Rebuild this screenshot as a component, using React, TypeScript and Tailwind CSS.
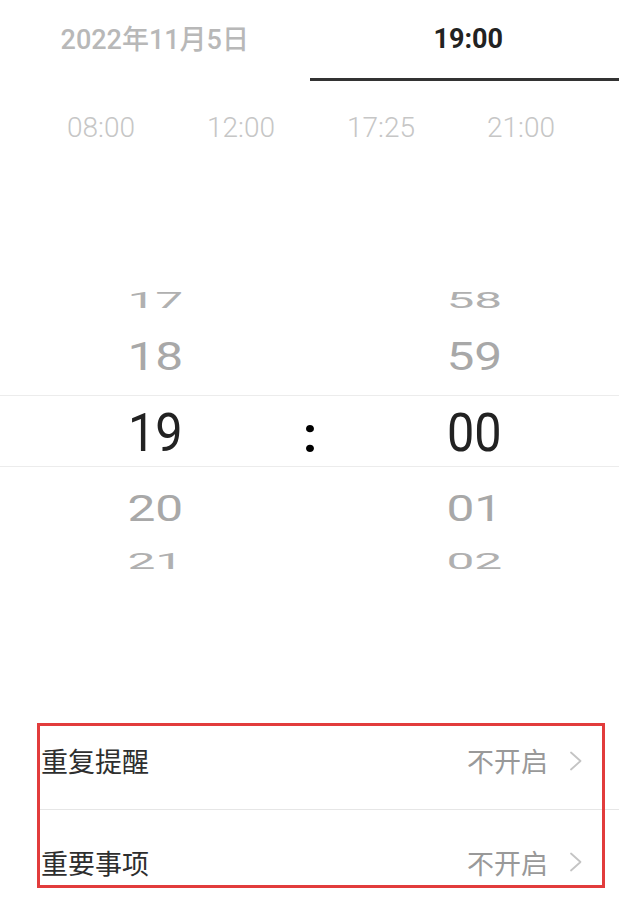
import React from "react";

const digits = "font-['Roboto','Noto_Sans_CJK_SC',sans-serif]";
const cjk = "font-['Noto_Sans_CJK_SC',sans-serif]";

const presets = ["08:00", "12:00", "17:25", "21:00"];

function Chevron() {
  return (
    <svg width="14" height="20" viewBox="0 0 14 20" fill="none" className="ml-[21px]">
      <path d="M2 1.5 L11.5 10 L2 18.5" stroke="#c4c4c4" strokeWidth="1.8" strokeLinecap="round" strokeLinejoin="round" />
    </svg>
  );
}

function WheelRow({
  h,
  m,
  height,
  scale,
  tone,
}: {
  h: string;
  m: string;
  height: string;
  scale: string;
  tone: string;
}) {
  return (
    <div className={`flex items-center ${height}`}>
      <div className="w-[310px] flex justify-center">
        <span className={`${digits} text-[54px] leading-none font-normal scale-x-[0.92] ${scale} ${tone}`}>{h}</span>
      </div>
      <div className="flex-1 pl-[19px] flex justify-center">
        <span className={`${digits} text-[54px] leading-none font-normal scale-x-[0.92] ${scale} ${tone}`}>{m}</span>
      </div>
    </div>
  );
}

function SettingRow({ label, value, height, divider }: { label: string; value: string; height: string; divider?: boolean }) {
  return (
    <div className={`ml-[40px] flex items-center pr-[36px] ${height} ${divider ? "border-b border-[#e6e6e6]" : ""}`}>
      <span className={`${cjk} text-[27px] leading-none text-[#2e2e2e] pl-[1px]`}>{label}</span>
      <div className="ml-auto flex items-center">
        <span className={`${cjk} text-[27px] leading-none text-[#999999]`}>{value}</span>
        <Chevron />
      </div>
    </div>
  );
}

export default function App() {
  return (
    <div className="relative w-full h-[903px] bg-white overflow-hidden">
      {/* tabs */}
      <div className="grid grid-cols-2 h-[81px]">
        <div className="flex items-center justify-center">
          <span className={`${digits} text-[27px] leading-none font-medium text-[#b8b8b8]`}>2022年11月5日</span>
        </div>
        <div className="flex items-center justify-center pl-[8px] border-b-[3px] border-[#333333]">
          <span className={`${digits} text-[27px] leading-none font-bold text-[#222222]`}>19:00</span>
        </div>
      </div>

      {/* quick presets */}
      <div className="flex items-center h-[94px] pl-[31px]">
        {presets.map((t) => (
          <div key={t} className="w-[140px] flex justify-center">
            <span className={`${digits} text-[28px] leading-none font-light text-[#c6c6c6]`}>{t}</span>
          </div>
        ))}
      </div>

      <div className="h-[106px]" />

      {/* wheel */}
      <WheelRow h="17" m="58" height="h-[38px]" scale="scale-y-[0.42]" tone="text-[#b0b0b0]" />
      <WheelRow h="18" m="59" height="h-[76px]" scale="scale-y-[0.73]" tone="text-[#a8a8a8]" />
      <div className="flex items-center h-[72px] border-y border-[#ececec]">
        <div className="w-[310px] flex justify-center">
          <span className={`${digits} text-[54px] leading-none font-normal scale-x-[0.9] text-[#222222] translate-y-[2px]`}>19</span>
        </div>
        <div className="w-0 flex justify-center">
          <span className={`${digits} text-[50px] leading-none font-bold text-black translate-y-[4px]`}>:</span>
        </div>
        <div className="flex-1 pl-[19px] flex justify-center">
          <span className={`${digits} text-[54px] leading-none font-normal scale-x-[0.9] text-[#222222] translate-y-[2px]`}>00</span>
        </div>
      </div>
      <WheelRow h="20" m="01" height="h-[81px]" scale="scale-y-[0.7]" tone="text-[#a8a8a8]" />
      <WheelRow h="21" m="02" height="h-[26px]" scale="scale-y-[0.42]" tone="text-[#b0b0b0]" />

      <div className="h-[138px]" />

      {/* settings */}
      <SettingRow label="重复提醒" value="不开启" height="h-[98px]" divider />
      <SettingRow label="重要事项" value="不开启" height="h-[104px]" />

      {/* highlight frame */}
      <div className="absolute left-[37px] top-[723px] w-[568px] h-[165px] border-[3px] border-[#e23c3c] pointer-events-none" />
    </div>
  );
}
